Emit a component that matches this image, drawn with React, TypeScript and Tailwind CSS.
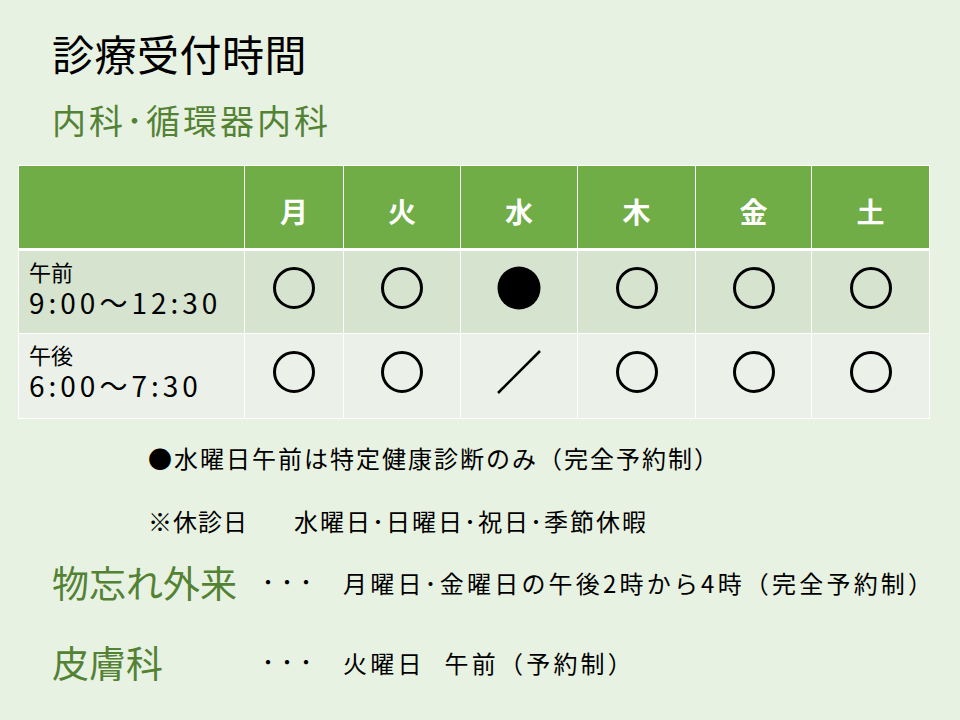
import type { ReactNode } from "react";

const cols = "grid grid-cols-[225px_98px_116px_116px_117px_115px_117px] gap-x-px";

type Mark = "open" | "full" | "none";

const days = ["月", "火", "水", "木", "金", "土"];

const rows: { label: string; time: string; marks: Mark[]; bg: string; h: string }[] = [
  {
    label: "午前",
    time: "9:00～12:30",
    marks: ["open", "open", "full", "open", "open", "open"],
    bg: "bg-[#d5e3cf]",
    h: "h-[82px]",
  },
  {
    label: "午後",
    time: "6:00～7:30",
    marks: ["open", "open", "none", "open", "open", "open"],
    bg: "bg-[#ebf1e9]",
    h: "h-[84px]",
  },
];

function MarkIcon({ mark }: { mark: Mark }) {
  return (
    <svg width="46" height="46" viewBox="0 0 46 46">
      {mark === "open" && <circle cx="23" cy="23" r="19.5" fill="none" stroke="#000" strokeWidth="3" />}
      {mark === "full" && <circle cx="23" cy="23" r="21.5" fill="#000" />}
      {mark === "none" && <line x1="2" y1="44" x2="44" y2="2" stroke="#000" strokeWidth="2.5" />}
    </svg>
  );
}

function Clinic({ name, children }: { name: string; children: ReactNode }) {
  return (
    <div className="flex items-center">
      <div className="w-[206px] text-[37px] leading-[44px] text-[#548235]">{name}</div>
      <div className="w-[85px] text-[20px] leading-none tracking-[-1px]">・・・</div>
      <div className="pt-[2px] text-[24px] leading-[30px] tracking-[3.2px]">{children}</div>
    </div>
  );
}

export default function App() {
  return (
    <div className="h-[720px] w-[960px] overflow-hidden bg-[#e8f2e2] font-['Noto_Sans_CJK_JP','Noto_Sans',sans-serif] text-black">
      <h1 className="pl-[52px] pt-[32px] text-[42px] leading-[42px] tracking-[0.5px] font-normal">診療受付時間</h1>
      <h2 className="mt-[29px] pl-[52px] text-[34px] leading-[34px] tracking-[3px] text-[#548235]">内科･循環器内科</h2>

      <div className="ml-[18px] mt-[28px] flex w-[912px] flex-col bg-white p-px">
        <div className={`${cols} h-[82px]`}>
          <div className="bg-[#70ad47]" />
          {days.map((d) => (
            <div key={d} className="flex items-center justify-center bg-[#70ad47] pt-[8px] text-[28px] font-bold text-white">
              {d}
            </div>
          ))}
        </div>
        {rows.map((r, i) => (
          <div key={r.label} className={`${cols} ${r.h} ${i === 0 ? "mt-[3px]" : "mt-px"}`}>
            <div className={`${r.bg} flex flex-col pl-[10px] pt-[7px]`}>
              <span className="text-[22px] leading-[26px]">{r.label}</span>
              <span className="mt-[1px] text-[28px] leading-[34px] tracking-[4px]">{r.time}</span>
            </div>
            {r.marks.map((m, j) => (
              <div key={j} className={`${r.bg} flex items-center justify-center pb-[8px]`}>
                <MarkIcon mark={m} />
              </div>
            ))}
          </div>
        ))}
      </div>

      <div className="ml-[148px] mt-[24px] text-[24px] leading-[30px] tracking-[2px]">
        ●水曜日午前は特定健康診断のみ（完全予約制）
      </div>
      <div className="ml-[148px] mt-[33px] flex text-[24px] leading-[30px]">
        <span className="tracking-[1px]">※休診日</span>
        <span className="ml-[46px] tracking-[2px]">水曜日･日曜日･祝日･季節休暇</span>
      </div>

      <div className="ml-[52px] mt-[24px] flex flex-col gap-[36px]">
        <Clinic name="物忘れ外来">月曜日･金曜日の午後2時から4時（完全予約制）</Clinic>
        <Clinic name="皮膚科">
          <span>火曜日</span>
          <span className="ml-[20px]">午前（予約制）</span>
        </Clinic>
      </div>
    </div>
  );
}
